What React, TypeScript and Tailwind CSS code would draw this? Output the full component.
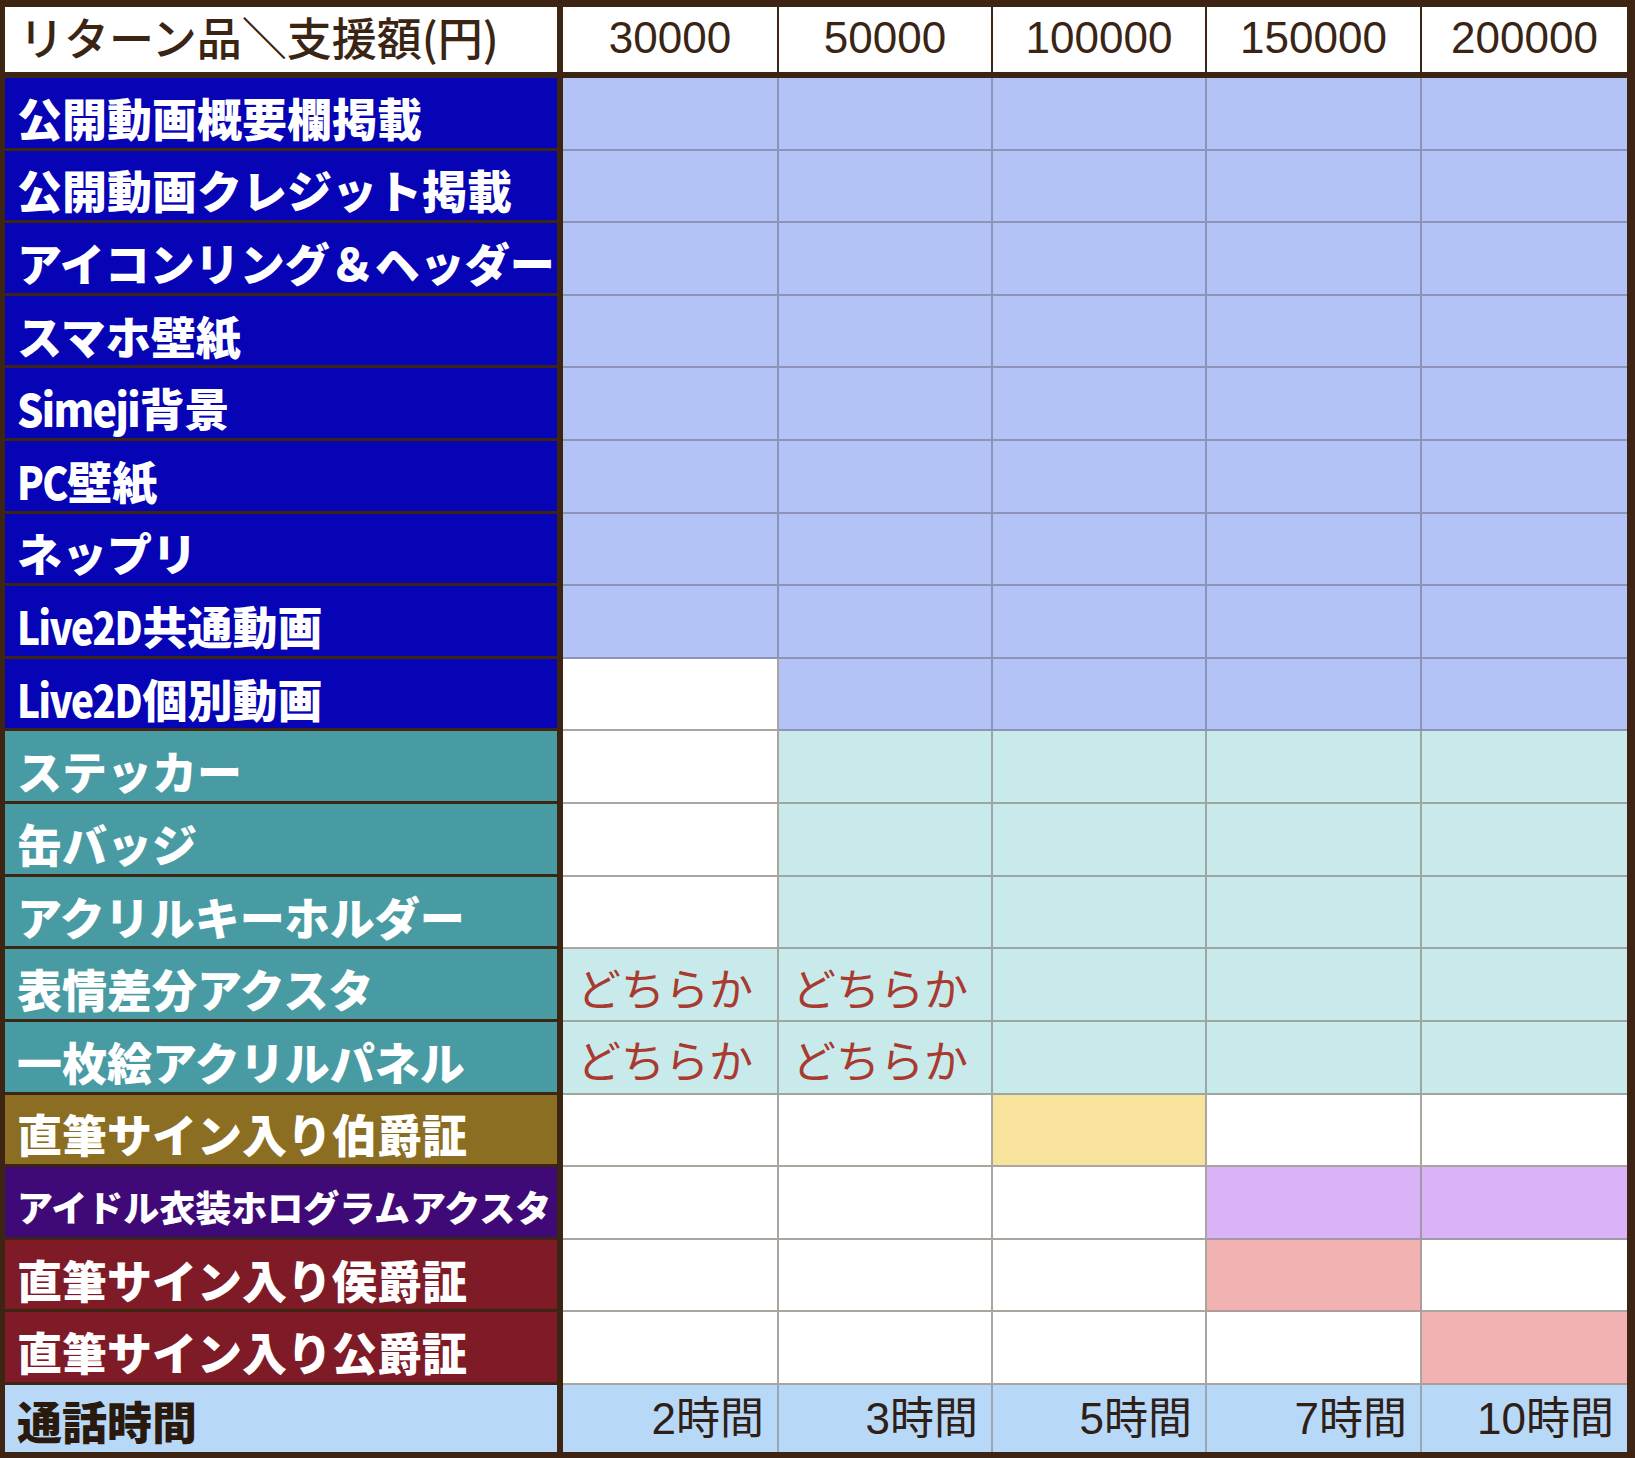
import React from "react";

type CellKind = "B" | "T" | "W" | "Y" | "P" | "K";

const cellStyles: Record<CellKind, string> = {
  B: "bg-[#b3c3f6] border-[#8e93b8]",
  T: "bg-[#c8eaea] border-[#9ea6a4]",
  W: "bg-white border-[#aca59d]",
  Y: "bg-[#f8e39c] border-[#aca59d]",
  P: "bg-[#d9b3f6] border-[#a395ab]",
  K: "bg-[#f2b2b2] border-[#b09a9a]",
};

const colClasses = [
  "w-[216px] border-r-2",
  "w-[214px] border-r-2",
  "w-[214px] border-r-2",
  "w-[215px] border-r-2",
  "w-[205px]",
];

type Row = {
  label: React.ReactNode;
  labelBg: string;
  small?: boolean;
  cells: CellKind[];
  text?: (string | null)[];
};

const Live2D = () => (
  <span className="inline-block origin-left scale-x-[0.86] -mr-[19px] tracking-[-0.04em]">Live2D</span>
);

const rows: Row[] = [
  { label: "公開動画概要欄掲載", labelBg: "bg-[#0604b4]", cells: ["B", "B", "B", "B", "B"] },
  { label: "公開動画クレジット掲載", labelBg: "bg-[#0604b4]", cells: ["B", "B", "B", "B", "B"] },
  { label: "アイコンリング＆ヘッダー", labelBg: "bg-[#0604b4]", cells: ["B", "B", "B", "B", "B"] },
  { label: "スマホ壁紙", labelBg: "bg-[#0604b4]", cells: ["B", "B", "B", "B", "B"] },
  {
    label: (
      <>
        <span className="inline-block origin-left scale-x-[0.92] -mr-[10px] tracking-[-0.04em]">Simeji</span>背景
      </>
    ),
    labelBg: "bg-[#0604b4]",
    cells: ["B", "B", "B", "B", "B"],
  },
  {
    label: (
      <>
        <span className="inline-block origin-left scale-x-[0.87] -mr-[7px] tracking-[-0.04em]">PC</span>壁紙
      </>
    ),
    labelBg: "bg-[#0604b4]",
    cells: ["B", "B", "B", "B", "B"],
  },
  { label: "ネップリ", labelBg: "bg-[#0604b4]", cells: ["B", "B", "B", "B", "B"] },
  { label: <><Live2D />共通動画</>, labelBg: "bg-[#0604b4]", cells: ["B", "B", "B", "B", "B"] },
  { label: <><Live2D />個別動画</>, labelBg: "bg-[#0604b4]", cells: ["W", "B", "B", "B", "B"] },
  { label: "ステッカー", labelBg: "bg-[#489ba3]", cells: ["W", "T", "T", "T", "T"] },
  { label: "缶バッジ", labelBg: "bg-[#489ba3]", cells: ["W", "T", "T", "T", "T"] },
  { label: "アクリルキーホルダー", labelBg: "bg-[#489ba3]", cells: ["W", "T", "T", "T", "T"] },
  {
    label: "表情差分アクスタ",
    labelBg: "bg-[#489ba3]",
    cells: ["T", "T", "T", "T", "T"],
    text: ["どちらか", "どちらか", null, null, null],
  },
  {
    label: "一枚絵アクリルパネル",
    labelBg: "bg-[#489ba3]",
    cells: ["T", "T", "T", "T", "T"],
    text: ["どちらか", "どちらか", null, null, null],
  },
  { label: "直筆サイン入り伯爵証", labelBg: "bg-[#8b6e21]", cells: ["W", "W", "Y", "W", "W"] },
  {
    label: "アイドル衣装ホログラムアクスタ",
    labelBg: "bg-[#3f0a77]",
    small: true,
    cells: ["W", "W", "W", "P", "P"],
  },
  { label: "直筆サイン入り侯爵証", labelBg: "bg-[#7f1a27]", cells: ["W", "W", "W", "K", "W"] },
  { label: "直筆サイン入り公爵証", labelBg: "bg-[#7f1a27]", cells: ["W", "W", "W", "W", "K"] },
];

const amounts = ["30000", "50000", "100000", "150000", "200000"];
const hours = ["2時間", "3時間", "5時間", "7時間", "10時間"];

export default function App() {
  return (
    <div className="w-[1635px] h-[1458px] bg-[#3d2413] pt-[7px] pl-[5px] pr-[8px] pb-[6px] flex flex-col font-['Noto_Sans_CJK_JP',sans-serif]">
      {/* Header */}
      <div className="flex h-[65px] shrink-0">
        <div className="w-[552px] shrink-0 bg-white flex items-center pl-[14px] pb-[6px] text-[45px] font-medium leading-none text-[#3a2414] whitespace-nowrap">
          リターン品＼支援額(円)
        </div>
        <div className="ml-[6px] flex">
          {amounts.map((a, i) => (
            <div
              key={a}
              className={`${colClasses[i]} border-[#3d2413] bg-white flex items-center justify-center pb-[3px] text-[44px] leading-none text-[#3a2414] font-['Liberation_Sans',sans-serif]`}
            >
              {a}
            </div>
          ))}
        </div>
      </div>
      <div className="h-[6px] shrink-0" />

      {/* Body */}
      <div className="flex-1 flex flex-col min-h-0">
        {rows.map((r, ri) => (
          <div key={ri} className="flex-1 flex min-h-0">
            <div
              className={`w-[552px] shrink-0 ${r.labelBg} border-b-[3px] border-[#3d2413] flex items-center pl-[12px] pt-[9px] text-white font-black leading-none whitespace-nowrap overflow-hidden ${
                r.small ? "text-[36px]" : "text-[45px]"
              }`}
            >
              {r.label}
            </div>
            <div className="ml-[6px] flex">
              {r.cells.map((c, ci) => (
                <div
                  key={ci}
                  className={`${colClasses[ci]} border-b-2 ${cellStyles[c]} flex items-center justify-center pr-[10px] pt-[4px] text-[44px] leading-none text-[#a83a2f]`}
                >
                  {r.text && r.text[ci] ? r.text[ci] : null}
                </div>
              ))}
            </div>
          </div>
        ))}
      </div>

      {/* Footer */}
      <div className="flex h-[67px] shrink-0">
        <div className="w-[552px] shrink-0 bg-[#b8d8f8] flex items-center pl-[12px] pt-[3px] text-[45px] font-black leading-none text-[#2a1a0e] whitespace-nowrap">
          通話時間
        </div>
        <div className="ml-[6px] flex">
          {hours.map((h, i) => (
            <div
              key={h}
              className={`${colClasses[i]} border-[#9aa6b4] bg-[#b8d8f8] flex items-center justify-end pr-[13px] text-[44px] leading-none text-[#2e2016] font-['Liberation_Sans','Noto_Sans_CJK_JP',sans-serif]`}
            >
              {h}
            </div>
          ))}
        </div>
      </div>
    </div>
  );
}
